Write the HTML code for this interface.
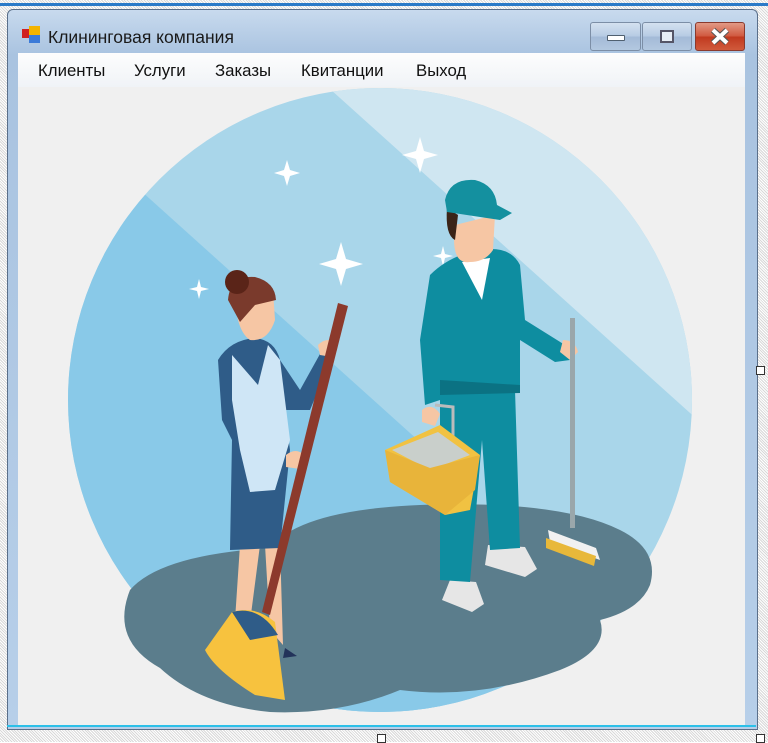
<!DOCTYPE html>
<html><head><meta charset="utf-8"><style>
html,body{margin:0;padding:0;width:768px;height:742px;overflow:hidden;background:#fff;font-family:"Liberation Sans",sans-serif}
.dots{position:absolute;left:0;top:0;width:768px;height:742px;background:repeating-linear-gradient(45deg,#d8d8d8 0 1px,#fff 1px 2px)}
.topline{position:absolute;left:0;top:3px;width:768px;height:3px;background:#2a7ac8}
.win{position:absolute;left:7px;top:9px;width:749px;height:719px;border:1px solid #5a6f8a;border-radius:6px 6px 0 0;background:linear-gradient(#c8daee,#a9c3e0 45px,#b7cfe9);}
.title{position:absolute;left:48px;top:27px;font-size:17.5px;color:#1a1a1a}
.icon{position:absolute;left:22px;top:26px}
.menu{position:absolute;left:18px;top:53px;width:727px;height:34px;background:linear-gradient(#fdfdfd,#f0f3f7)}
.menu span{position:absolute;top:8px;font-size:16.8px;color:#111}
.client{position:absolute;left:18px;top:87px;width:727px;height:638px;background:#f0f0f0;overflow:hidden}
.btn{position:absolute;top:22px;height:27px;border:1px solid #7c8ea6;border-radius:3px;background:linear-gradient(#d4e1f0,#b6cbe3 50%,#a3bad7 51%,#b3c8e0)}
.close{background:linear-gradient(#e29a86,#d0573e 50%,#c0391f 51%,#d05a3c);border-color:#8a3a2e}
.bottom{position:absolute;left:7px;top:725px;width:749px;height:2px;background:#2cc0e8}
.h{position:absolute;width:7px;height:7px;background:#fff;border:1px solid #333}
</style></head><body>
<div class="dots"></div>
<div class="topline"></div>
<div class="win"></div>
<div class="bottom"></div>
<svg class="icon" width="20" height="18"><rect x="0" y="3" width="9" height="9" fill="#d02020"/><rect x="7" y="0" width="11" height="11" fill="#f4b400"/><rect x="7" y="9" width="11" height="8" fill="#3b7ad8"/></svg>
<div class="title">Клининговая компания</div>
<div class="btn" style="left:590px;width:49px"><div style="position:absolute;left:16px;top:12px;width:16px;height:4px;background:#fff;border:1px solid #506070;border-radius:1px"></div></div>
<div class="btn" style="left:642px;width:48px"><div style="position:absolute;left:17px;top:7px;width:10px;height:9px;border:2px solid #556;background:#e8eef5"></div></div>
<div class="btn close" style="left:695px;width:48px"><svg width="48" height="27"><path d="M17 7 L31 20 M31 7 L17 20" stroke="#555" stroke-width="6"/><path d="M17 7 L31 20 M31 7 L17 20" stroke="#fff" stroke-width="4"/></svg></div>
<div class="menu"><span style="left:20px">Клиенты</span><span style="left:116px">Услуги</span><span style="left:197px">Заказы</span><span style="left:283px">Квитанции</span><span style="left:398px">Выход</span></div>
<div class="client">
<svg width="727" height="638" viewBox="18 87 727 638">
<defs><clipPath id="c"><circle cx="380" cy="400" r="312"/></clipPath></defs>
<g clip-path="url(#c)">
<rect x="60" y="80" width="650" height="650" fill="#a9d6ea"/>
<polygon points="320,80 720,80 720,440" fill="#cfe6f1"/>
<polygon points="60,170 140,190 440,460 440,730 60,730" fill="#89c9e8"/>
<ellipse cx="420" cy="660" rx="240" ry="60" fill="#89c9e8"/>
</g>
<path d="M130 590 Q160 555 270 548 Q300 510 420 505 Q560 500 620 530 Q660 550 650 585 Q640 610 600 620 Q610 650 560 670 Q480 700 400 690 Q340 715 270 712 Q200 705 160 668 Q110 640 130 590Z" fill="#5b7d8c"/>
<g fill="#fff">
<path d="M287 160 l3 10 10 3 -10 3 -3 10 -3 -10 -10 -3 10 -3z"/>
<path d="M420 137 l4 14 14 4 -14 4 -4 14 -4 -14 -14 -4 14 -4z"/>
<path d="M341 242 l5 17 17 5 -17 5 -5 17 -5 -17 -17 -5 17 -5z"/>
<path d="M199 279 l2 8 8 2 -8 2 -2 8 -2 -8 -8 -2 8 -2z"/>
<path d="M443 246 l2 8 8 2 -8 2 -2 8 -2 -8 -8 -2 8 -2z"/>
</g>
<!-- man -->
<path d="M450 580 l-8 20 30 12 12 -8 -8 -22z" fill="#e6e6e6"/>
<path d="M488 545 l-3 20 40 12 12 -8 -12 -22z" fill="#e6e6e6"/>
<path d="M440 380 L440 580 L470 582 L482 440 L490 550 L520 548 L515 390z" fill="#0e8da0"/>
<path d="M430 275 Q450 255 480 250 Q510 245 520 265 L525 320 L565 345 L570 360 L555 362 L520 340 L520 390 L440 392 L440 400 L425 405 L420 340z" fill="#0e8da0"/>
<path d="M440 380 L520 385 L520 393 L440 395z" fill="#0b7283"/>
<path d="M462 262 L490 258 L482 300z" fill="#fff"/>
<path d="M455 225 Q450 265 470 262 Q485 262 493 250 L495 215z" fill="#f6c6a4"/>
<path d="M447 208 Q445 235 455 240 L458 215z" fill="#3a2418"/>
<path d="M445 200 Q450 178 475 180 Q495 185 497 205 L512 213 L500 220 L447 212z" fill="#14909f"/>
<path d="M422 410 q10 -8 18 4 l-5 12 -13 -4z" fill="#f6c6a4"/>
<path d="M563 340 q12 0 15 12 l-8 8 -10 -8z" fill="#f6c6a4"/>
<rect x="570" y="318" width="5" height="210" fill="#9aa7ab"/>
<path d="M548 530 l48 18 4 12 -50 -18z" fill="#f1f1f1"/><path d="M546 538 l50 18 -2 10 -48 -18z" fill="#e8b83a"/>
<path d="M435 405 l18 2 0 30" stroke="#bbb" stroke-width="3" fill="none"/>
<path d="M385 450 L440 425 L480 455 L470 510 L445 515 L390 482z" fill="#f1c242"/>
<path d="M392 450 L438 432 L470 455 L430 470z" fill="#c9cfcb"/>
<path d="M385 450 L430 468 L480 455 L475 490 L445 515 L390 482z" fill="#e8b43a"/>
<!-- woman -->
<path d="M240 545 L235 620 L250 622 L260 545z M265 545 L270 630 L283 645 L280 545z" fill="#f6c6a4"/>
<path d="M285 648 l12 8 -14 2z" fill="#23335a"/>
<path d="M218 360 Q230 340 255 338 Q275 340 280 360 L300 390 L325 345 L335 350 L310 410 L285 410 L290 450 L280 548 L230 550 L232 440 L222 420z" fill="#2f5c88"/>
<path d="M232 355 L258 385 L268 345 L280 360 L290 440 L275 490 L250 492 L240 450 L232 400z" fill="#cfe6f6"/>
<path d="M235 290 Q235 330 250 340 Q268 342 275 320 L273 290 Q255 275 235 290z" fill="#f6c6a4"/>
<path d="M228 300 Q230 275 255 277 Q275 282 276 300 L255 305 L240 322z" fill="#7a3a2c"/>
<circle cx="237" cy="282" r="12" fill="#5a2418"/>
<path d="M286 455 q10 -8 18 0 l-4 14 -14 -2z" fill="#f6c6a4"/>
<path d="M318 345 q10 -10 20 0 l-6 12 -12 -2z" fill="#f6c6a4"/>
<path d="M338 303 L348 306 L270 615 L262 612z" fill="#8c3a2c"/>
<path d="M232 612 Q255 605 275 622 L285 700 L255 695 Q215 670 205 650z" fill="#f7c23e"/>
<path d="M232 612 Q260 605 278 635 L250 640z" fill="#2f5c88"/>
</svg>
</div>
<div class="h" style="left:377px;top:734px"></div>
<div class="h" style="left:756px;top:366px"></div>
<div class="h" style="left:756px;top:734px"></div>
</body></html>
